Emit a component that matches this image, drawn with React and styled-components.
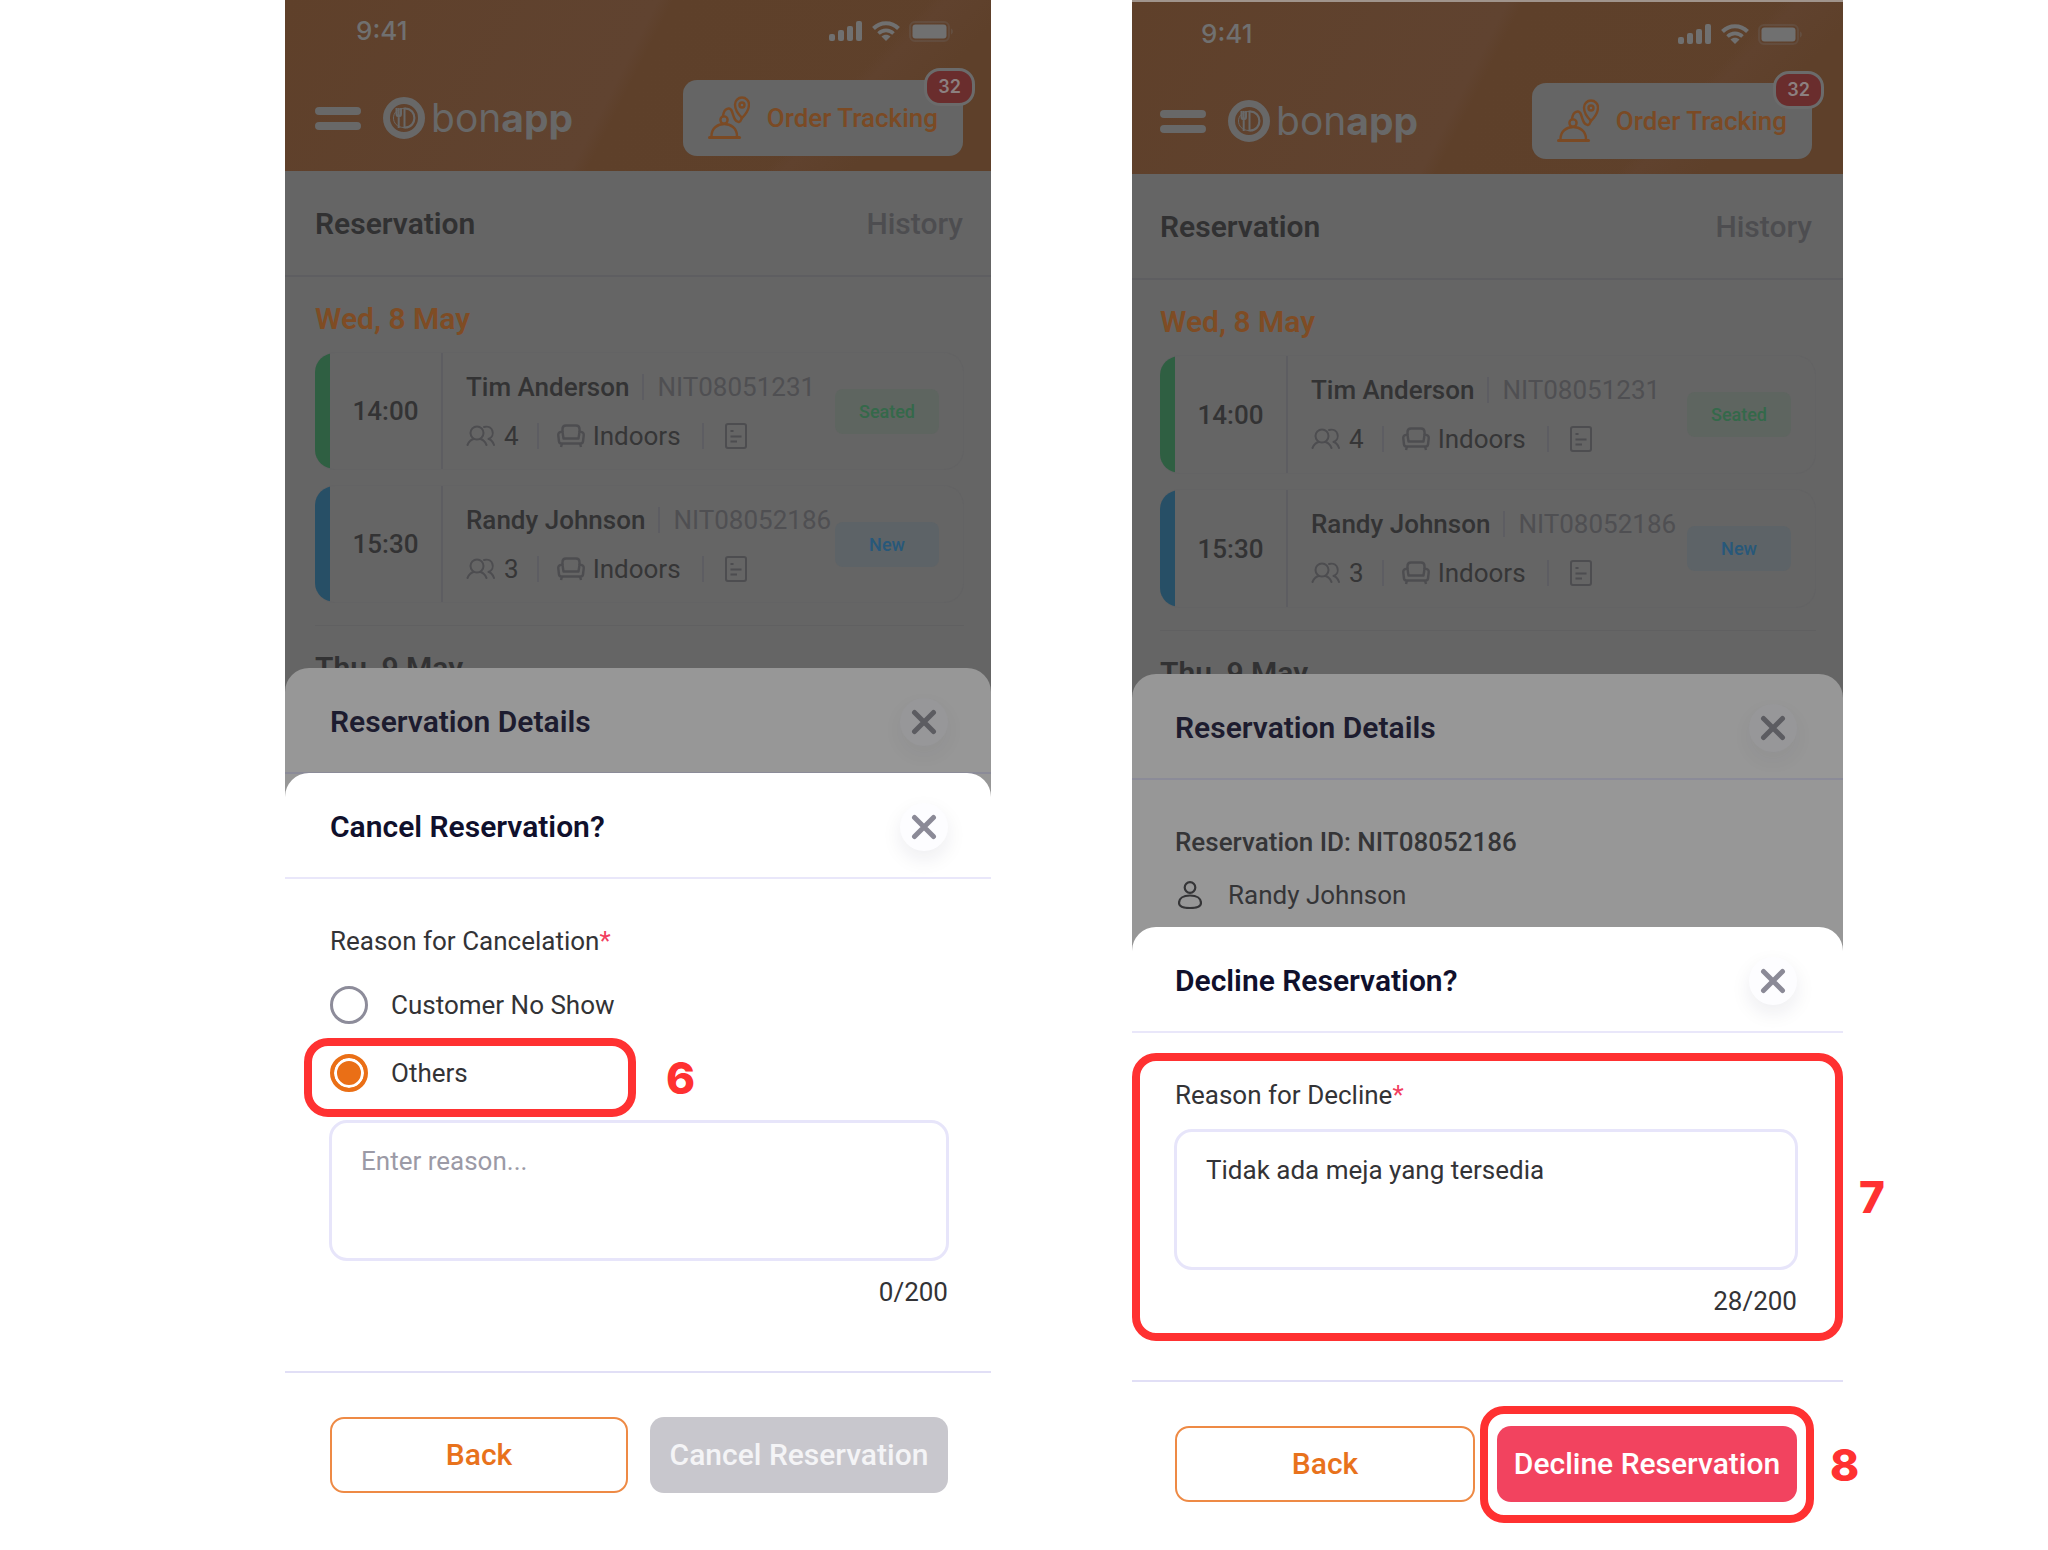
import React, { useState } from "react";
import styled, { createGlobalStyle } from "styled-components";

const GlobalStyle = createGlobalStyle`
  * {
    box-sizing: border-box;
  }
  body {
    margin: 0;
    background: #fff;
    font-family: Roboto, "Liberation Sans", sans-serif;
    font-size: 26px;
    line-height: 32px;
    color: #333336;
  }
  button,
  input,
  textarea {
    font: inherit;
    margin: 0;
  }
  h2,
  h3,
  p {
    margin: 0;
  }
  svg {
    display: block;
    flex: none;
  }
`;

const Page = styled.main`
  display: grid;
  grid-template-columns: 285fr 706fr 141fr 711fr 205fr;
  align-items: start;
`;

const Phone = styled.section`
  --edge-left: ${(p) => (p.$wide ? 28 : 30)}px;
  --edge-right: ${(p) => (p.$wide ? 31 : 28)}px;
  --sheet-left: ${(p) => (p.$wide ? 43 : 45)}px;
  --sheet-right: ${(p) => (p.$wide ? 46 : 43)}px;
  grid-column: ${(p) => p.$column};
  min-width: 0;
  border-top: ${(p) => (p.$wide ? "2px solid #a0948c" : "none")};
`;

/* ---------- dimmed screen behind the sheets ---------- */

const Screen = styled.div`
  background: #656565;
  color: #333334;
`;

const TopBar = styled.header`
  padding: ${(p) => (p.$wide ? 16 : 15)}px var(--edge-right) 15px var(--edge-left);
  background:
    linear-gradient(134deg, transparent 74%, #60422e 76%, #5e402a 84%),
    linear-gradient(117deg, #5f402a 0%, #604330 47%, #5e402a 49%, #5f412b 100%);
`;

const StatusBar = styled.div`
  display: flex;
  justify-content: space-between;
  align-items: center;
  padding: 0 9px 0 41px;
  margin-bottom: 33px;
  color: #707070;
  font-family: Inter, sans-serif;
  font-weight: 500;
`;

const StatusIcons = styled.div`
  display: flex;
  align-items: center;
  gap: 9px;
`;

const NavRow = styled.div`
  display: flex;
  align-items: center;
  color: #686868;
`;

const MenuButton = styled.button`
  display: flex;
  flex-direction: column;
  gap: 7px;
  width: 46px;
  padding: 0;
  margin-right: 22px;
  border: 0;
  background: none;

  span {
    height: 8px;
    border-radius: 4px;
    background: #686868;
  }
`;

const Brand = styled.a`
  display: flex;
  align-items: center;
  gap: 6px;
  color: inherit;
  text-decoration: none;
  font-family: Inter, sans-serif;
  font-size: 39px;
  font-weight: 400;

  b {
    font-weight: 700;
  }
`;

const TrackingButton = styled.button`
  position: relative;
  display: flex;
  align-items: center;
  gap: 17px;
  height: 76px;
  padding: 0 25px;
  margin-left: auto;
  border: 0;
  border-radius: 14px;
  background: #656565;
  color: #7b4a24;
  font-weight: 500;
  white-space: nowrap;
`;

const Count = styled.span`
  position: absolute;
  top: -12px;
  right: -12px;
  padding: 0 11px;
  border: 3px solid #6b6b6b;
  border-radius: 16px;
  background: #6a2d2d;
  color: #8c8080;
  font-family: Inter, sans-serif;
  font-size: 18px;
  font-weight: 600;
`;

const Tabs = styled.nav`
  display: flex;
  justify-content: space-between;
  padding: 35px var(--edge-right) 33px var(--edge-left);
  border-bottom: 2px solid #5e5e61;
  font-size: 30px;
  line-height: 36px;
`;

const Tab = styled.a`
  color: ${(p) => (p.$active ? "#313132" : "#4d4d50")};
  font-weight: ${(p) => (p.$active ? 600 : 500)};
  text-decoration: none;
`;

const List = styled.div`
  padding: 24px 27px ${(p) => (p.$wide ? 7 : 6)}px var(--edge-left);
`;

const Day = styled.h3`
  color: ${(p) => (p.$today ? "#7f4c24" : "#323233")};
  font-size: 30px;
  line-height: 36px;
  font-weight: 600;
`;

const Cards = styled.div`
  display: grid;
  gap: 15px;
  padding: 15px 0 22px;
  margin-bottom: 24px;
  border-bottom: 1px solid #606061;
`;

const Card = styled.article`
  display: flex;
  align-items: center;
  height: ${(p) => (p.$wide ? 119 : 118)}px;
  border: 1px solid #636364;
  border-left: 0;
  border-radius: 20px;
  overflow: hidden;

  &::before {
    content: "";
    align-self: stretch;
    width: 15px;
    background: ${(p) => p.$color};
  }
`;

const Time = styled.time`
  display: grid;
  place-items: center;
  align-self: stretch;
  width: 113px;
  border-right: 2px solid #5d5d61;
  font-weight: 500;
`;

const Info = styled.div`
  flex: 1;
  min-width: 0;
  display: grid;
  gap: 17px;
  padding-left: 23px;
  white-space: nowrap;
`;

const Line = styled.div`
  display: flex;
  align-items: center;
`;

const Name = styled.span`
  font-weight: 500;
`;

const Muted = styled.span`
  color: #4f4f52;
`;

const Rule = styled.span`
  width: 2px;
  height: 26px;
  margin: 0 ${(p) => p.$gap}px;
  background: #5d5d62;
`;

const Meta = styled.span`
  display: flex;
  align-items: center;
  gap: 8px;
  color: #4d4d50;

  span {
    color: #363637;
  }
`;

const Status = styled.span`
  width: 104px;
  margin-right: 24px;
  border-radius: 8px;
  background: ${(p) => p.$bg};
  color: ${(p) => p.$color};
  font-size: 18px;
  line-height: 45px;
  font-weight: 500;
  text-align: center;
`;

/* ---------- bottom sheets ---------- */

const Sheet = styled.section`
  position: relative;
  margin-top: ${(p) => (p.$dim ? -24 : -25)}px;
  border-radius: 24px 24px 0 0;
  background: ${(p) => (p.$dim ? "#979797" : "#fff")};
`;

const SheetHeader = styled.header`
  display: flex;
  align-items: center;
  justify-content: space-between;
  padding: 30px var(--sheet-right) 26px var(--sheet-left);
  border-bottom: 2px solid ${(p) => (p.$dim ? "#8b8b98" : "#e9e7fa")};

  h2 {
    color: ${(p) => (p.$dim ? "#1d1c2f" : "#10102c")};
    font-size: 30px;
    line-height: 36px;
    font-weight: 600;
  }
`;

const CloseButton = styled.button`
  display: grid;
  place-items: center;
  width: 48px;
  height: 48px;
  padding: 0;
  border: 0;
  border-radius: 50%;
  background: ${(p) => (p.$dim ? "#979799" : "#fdfdff")};
  box-shadow: 0 8px 20px rgba(30, 30, 60, ${(p) => (p.$dim ? 0.05 : 0.08)});
  color: ${(p) => (p.$dim ? "#5c5c61" : "#8b8a97")};
`;

const Details = styled.div`
  display: grid;
  gap: 21px;
  padding: 46px var(--sheet-right) 41px var(--sheet-left);
  color: #353537;

  h3 {
    font-size: 26px;
    line-height: 32px;
    font-weight: 500;
  }
`;

const Guest = styled.p`
  display: flex;
  align-items: center;
  gap: 26px;
  padding-left: 3px;
`;

const Peek = styled.div`
  height: 24px;
`;

const Form = styled.form`
  position: relative;
`;

const Fields = styled.div`
  position: relative;
  padding: 46px var(--sheet-right) 63px var(--sheet-left);
`;

const Label = styled.label`
  display: block;
  margin-bottom: ${(p) => p.$gap}px;

  span {
    color: #f2405f;
  }
`;

const Choices = styled.div`
  display: grid;
  gap: 30px;
  margin-bottom: 28px;
`;

const Choice = styled.label`
  position: relative;
  display: flex;
  align-items: center;
  gap: 23px;
`;

const Radio = styled.input`
  appearance: none;
  width: 38px;
  height: 38px;
  border: 3px solid #8d8c9a;
  border-radius: 50%;
  background: #fff;

  &:checked {
    border: 4px solid #ea6f16;
    background: #ea6f16;
    box-shadow: inset 0 0 0 3px #fff;
  }
`;

const Reason = styled.textarea`
  display: block;
  width: calc(100% + 2px);
  height: 141px;
  padding: 22px 29px;
  margin: 0 -1px;
  border: 3px solid #e7e5fa;
  border-radius: 18px;
  outline: 0;
  resize: none;
  background: #fff;
  color: #333336;

  &::placeholder {
    color: #9b9aa6;
  }
`;

const Counter = styled.p`
  margin-top: 15px;
  text-align: right;
`;

const Actions = styled.footer`
  display: grid;
  grid-template-columns: 1fr 1fr;
  gap: 22px;
  padding: 44px var(--sheet-right) 56px var(--sheet-left);
  border-top: 2px solid #e1dff6;
`;

const Action = styled.button`
  width: 100%;
  height: 76px;
  padding: 0;
  border: ${(p) => (p.$fill ? "0" : "2px solid #ee8a45")};
  border-radius: 14px;
  background: ${(p) => p.$fill || "#fff"};
  color: ${(p) => (p.$fill ? p.$ink || "#fff" : "#e8721c")};
  font-size: 30px;
  font-weight: 500;
  white-space: nowrap;
`;

const ActionSlot = styled.div`
  position: relative;
`;

/* red numbered frame laid over the step it explains */
const Callout = styled.div`
  position: absolute;
  inset: ${(p) => p.$inset};
  width: ${(p) => p.$width || "auto"};
  display: flex;
  align-items: center;
  border: 8px solid #ff3131;
  border-radius: 24px;
  pointer-events: none;

  b {
    position: absolute;
    left: 100%;
    margin-left: ${(p) => p.$gap}px;
    color: #ff3131;
    font-family: Inter, sans-serif;
    font-size: 44px;
    font-weight: 800;
  }
`;

/* ---------- icons ---------- */

const SignalIcon = () => (
  <svg width="34" height="20" viewBox="0 0 34 20" fill="currentColor">
    <rect x="0" y="13" width="6" height="7" rx="2" />
    <rect x="9" y="9" width="6" height="11" rx="2" />
    <rect x="18" y="5" width="6" height="15" rx="2" />
    <rect x="27" y="0" width="6" height="20" rx="2" />
  </svg>
);

const WifiIcon = () => (
  <svg width="28" height="20" viewBox="0 0 28 20" fill="none" stroke="currentColor" strokeWidth="4">
    <path d="M1.5 7.5C8.500 .4 19.500 .4 26.500 7.500" />
    <path d="M6.500 12.500c4.300-4.200 10.700-4.200 15 0" strokeWidth="3.600" />
    <path d="M14 20l-4.500-4.600c2.500-2.300 6.500-2.300 9 0z" fill="currentColor" stroke="none" />
  </svg>
);

const BatteryIcon = () => (
  <svg width="45" height="21" viewBox="0 0 45 21">
    <rect x="1" y="1" width="39" height="19" rx="5" fill="none" stroke="currentColor" strokeOpacity=".25" strokeWidth="2" />
    <rect x="3.500" y="3.500" width="34" height="14" rx="3" fill="currentColor" />
    <path d="M42 7.500c2.500 1 2.500 5 0 6z" fill="currentColor" fillOpacity=".3" />
  </svg>
);

const LogoMark = () => (
  <svg width="42" height="42" viewBox="0 0 42 42" fill="none" stroke="currentColor">
    <circle cx="21" cy="21" r="17.500" strokeWidth="7" />
    <path d="M21 11.500c-14 0-14 19 0 19" strokeWidth="1" />
    <path d="M13.500 11v6c0 3 4.500 3 4.500 0v-6M15.700 11v20" strokeWidth="2" />
    <path d="M21.500 10.500v21" strokeWidth="2" />
    <path d="M22 11.500c12.500 0 12.500 19 0 19" strokeWidth="2.200" />
  </svg>
);

const TrackingIcon = () => (
  <svg width="42" height="44" viewBox="0 0 42 44" fill="none" stroke="currentColor" strokeWidth="2.400" strokeLinecap="round">
    <path d="M1.500 41.500h30" strokeWidth="3" />
    <path d="M3.500 40c0-16 25.500-16 25.500 0" />
    <circle cx="16" cy="24" r="3.600" />
    <path d="M15 20c1-8 7-9.500 9-4.500 1.500 4 2.500 11 7 10.500 2.500-.5 2-3 3-5" />
    <path d="M34 22c-4-4-7-8.500-7-13.500a7 7 0 0 1 14 0c0 5-3 9.500-7 13.500z" />
    <circle cx="34" cy="9" r="2.500" />
  </svg>
);

const GuestsIcon = () => (
  <svg width="30" height="22" viewBox="0 0 30 22" fill="none" stroke="currentColor" strokeWidth="2" strokeLinecap="round">
    <circle cx="11" cy="8" r="6.500" />
    <path d="M1.500 20c1.500-3.500 4-5.500 6-6M20.500 20c-1.500-3.500-4-5.500-6-6" />
    <path d="M18 2c9-2.500 12 9 4.500 12M23 14c2.500 1 4 3 5 6" />
  </svg>
);

const SofaIcon = () => (
  <svg width="28" height="24" viewBox="0 0 28 24" fill="none" stroke="currentColor" strokeWidth="2.400" strokeLinejoin="round">
    <path d="M5.500 8V5c0-2.500 1-3.500 3.500-3.500h10c2.500 0 3.500 1 3.500 3.500v3" />
    <path d="M5.500 8C2.500 7.500 1 9 1.300 11.500l.7 6c.2 1.500 1 2 2.500 2h19c1.500 0 2.300-.5 2.500-2l.7-6C27 9 25.500 7.500 22.500 8l-1 6.500h-15z" />
    <path d="M5 19.500L4 23M23 19.500l1 3.500" />
  </svg>
);

const NoteIcon = () => (
  <svg width="22" height="26" viewBox="0 0 22 26" fill="none" stroke="currentColor" strokeWidth="2">
    <rect x="1" y="1" width="20" height="24" rx="2" />
    <path d="M5.500 8h3M5.500 13.500h11M5.500 18.500h6.500" />
  </svg>
);

const PersonIcon = () => (
  <svg width="24" height="28" viewBox="0 0 24 28" fill="none" stroke="currentColor" strokeWidth="2.200">
    <circle cx="12" cy="6.500" r="5.300" />
    <path d="M12 14.500c7 0 11 3 11 7.500 0 3.500-3.500 5-11 5s-11-1.500-11-5c0-4.500 4-7.500 11-7.500z" />
  </svg>
);

const CloseIcon = () => (
  <svg width="26" height="26" viewBox="0 0 26 26" stroke="currentColor" strokeWidth="5" strokeLinecap="round">
    <path d="M3.500 3.500l19 19M22.500 3.500l-19 19" />
  </svg>
);

/* ---------- screens ---------- */

const reservations = [
  {
    time: "14:00",
    name: "Tim Anderson",
    id: "NIT08051231",
    guests: 4,
    status: "Seated",
    bar: "#2f5f42",
    bg: "#5e6560",
    ink: "#34694a",
  },
  {
    time: "15:30",
    name: "Randy Johnson",
    id: "NIT08052186",
    guests: 3,
    status: "New",
    bar: "#274f66",
    bg: "#5d6367",
    ink: "#27587a",
  },
];

function ReservationScreen({ wide }) {
  return (
    <Screen>
      <TopBar $wide={wide}>
        <StatusBar>
          <span>9:41</span>
          <StatusIcons>
            <SignalIcon />
            <WifiIcon />
            <BatteryIcon />
          </StatusIcons>
        </StatusBar>
        <NavRow>
          <MenuButton type="button" aria-label="Menu">
            <span />
            <span />
          </MenuButton>
          <Brand href="#home">
            <LogoMark />
            <span>
              bon<b>app</b>
            </span>
          </Brand>
          <TrackingButton type="button">
            <TrackingIcon />
            Order Tracking
            <Count>32</Count>
          </TrackingButton>
        </NavRow>
      </TopBar>
      <Tabs>
        <Tab $active href="#reservation">
          Reservation
        </Tab>
        <Tab href="#history">History</Tab>
      </Tabs>
      <List $wide={wide}>
        <Day $today>Wed, 8 May</Day>
        <Cards>
          {reservations.map((r) => (
            <Card key={r.id} $wide={wide} $color={r.bar}>
              <Time>{r.time}</Time>
              <Info>
                <Line>
                  <Name>{r.name}</Name>
                  <Rule $gap={13} />
                  <Muted>{r.id}</Muted>
                </Line>
                <Line>
                  <Meta>
                    <GuestsIcon />
                    <span>{r.guests}</span>
                  </Meta>
                  <Rule $gap={18} />
                  <Meta>
                    <SofaIcon />
                    <span>Indoors</span>
                  </Meta>
                  <Rule $gap={21} />
                  <Meta>
                    <NoteIcon />
                  </Meta>
                </Line>
              </Info>
              <Status $bg={r.bg} $color={r.ink}>
                {r.status}
              </Status>
            </Card>
          ))}
        </Cards>
        <Day>Thu, 9 May</Day>
      </List>
    </Screen>
  );
}

function SheetTitle({ dim, children }) {
  return (
    <SheetHeader $dim={dim}>
      <h2>{children}</h2>
      <CloseButton $dim={dim} type="button" aria-label="Close">
        <CloseIcon />
      </CloseButton>
    </SheetHeader>
  );
}

function CancelForm() {
  const [choice, setChoice] = useState("others");
  const [reason, setReason] = useState("");
  return (
    <Form>
      <Fields>
        <Label htmlFor="cancel-reason" $gap={29}>
          Reason for Cancelation<span>*</span>
        </Label>
        <Choices>
          <Choice>
            <Radio
              type="radio"
              name="cancel"
              checked={choice === "no-show"}
              onChange={() => setChoice("no-show")}
            />
            Customer No Show
          </Choice>
          <Choice>
            <Radio
              type="radio"
              name="cancel"
              checked={choice === "others"}
              onChange={() => setChoice("others")}
            />
            Others
            <Callout $inset="-16px auto -25px -26px" $width="332px" $gap={38}>
              <b>6</b>
            </Callout>
          </Choice>
        </Choices>
        <Reason
          id="cancel-reason"
          placeholder="Enter reason..."
          maxLength={200}
          value={reason}
          onChange={(e) => setReason(e.target.value)}
        />
        <Counter>{reason.length}/200</Counter>
      </Fields>
      <Actions>
        <Action type="button">Back</Action>
        <Action type="button" $fill="#c8c7cd" $ink="#f4f4f6" disabled={!reason}>
          Cancel Reservation
        </Action>
      </Actions>
    </Form>
  );
}

function DeclineForm() {
  const [reason, setReason] = useState("Tidak ada meja yang tersedia");
  return (
    <Form>
      <Fields>
        <Label htmlFor="decline-reason" $gap={18}>
          Reason for Decline<span>*</span>
        </Label>
        <Reason
          id="decline-reason"
          maxLength={200}
          value={reason}
          onChange={(e) => setReason(e.target.value)}
        />
        <Counter>{reason.length}/200</Counter>
        <Callout $inset="20px 0 39px" $gap={24}>
          <b>7</b>
        </Callout>
      </Fields>
      <Actions>
        <Action type="button">Back</Action>
        <ActionSlot>
          <Action type="button" $fill="#f2435f">
            Decline Reservation
          </Action>
          <Callout $inset="-20px -17px -21px" $gap={24}>
            <b>8</b>
          </Callout>
        </ActionSlot>
      </Actions>
    </Form>
  );
}

export default function App() {
  return (
    <Page>
      <GlobalStyle />
      <Phone $column={2}>
        <ReservationScreen />
        <Sheet $dim>
          <SheetTitle dim>Reservation Details</SheetTitle>
          <Peek />
        </Sheet>
        <Sheet>
          <SheetTitle>Cancel Reservation?</SheetTitle>
          <CancelForm />
        </Sheet>
      </Phone>
      <Phone $column={4} $wide>
        <ReservationScreen wide />
        <Sheet $dim>
          <SheetTitle dim>Reservation Details</SheetTitle>
          <Details>
            <h3>Reservation ID: NIT08052186</h3>
            <Guest>
              <PersonIcon />
              Randy Johnson
            </Guest>
          </Details>
        </Sheet>
        <Sheet>
          <SheetTitle>Decline Reservation?</SheetTitle>
          <DeclineForm />
        </Sheet>
      </Phone>
    </Page>
  );
}
